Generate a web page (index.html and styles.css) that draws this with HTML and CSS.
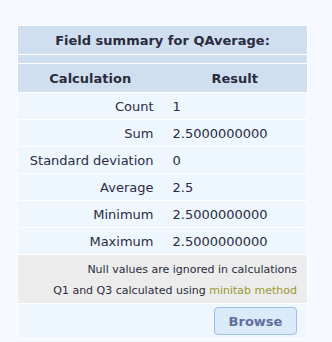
FILE: index.html
```html
<!DOCTYPE html>
<html>
<head>
<meta charset="utf-8">
<link rel="stylesheet" href="styles.css">
</head>
<body>
<table class="summary">
  <tr class="title-row"><th colspan="2">Field summary for QAverage:</th></tr>
  <tr class="spacer-row"><td colspan="2"></td></tr>
  <tr class="head-row"><th>Calculation</th><th>Result</th></tr>
  <tr class="data-row"><td class="label">Count</td><td class="value">1</td></tr>
  <tr class="data-row"><td class="label">Sum</td><td class="value">2.5000000000</td></tr>
  <tr class="data-row"><td class="label">Standard deviation</td><td class="value">0</td></tr>
  <tr class="data-row"><td class="label">Average</td><td class="value">2.5</td></tr>
  <tr class="data-row"><td class="label">Minimum</td><td class="value">2.5000000000</td></tr>
  <tr class="data-row"><td class="label">Maximum</td><td class="value">2.5000000000</td></tr>
  <tr class="note-row"><td colspan="2">
    <p class="note">Null values are ignored in calculations</p>
    <p class="note">Q1 and Q3 calculated using <a class="method" href="#">minitab method</a></p>
  </td></tr>
  <tr class="action-row"><td colspan="2"><button class="browse">Browse</button></td></tr>
</table>
</body>
</html>
```
FILE: styles.css
```css
html, body {
  margin: 0;
  padding: 0;
  background: #f5f8fe;
}
body {
  padding: 25px 0 0 17px;
  font-family: "DejaVu Sans", Verdana, sans-serif;
  color: #2a2c3e;
}
.summary {
  border-collapse: collapse;
  width: 291px;
  border: 1px solid #ffffff;
  table-layout: fixed;
}
.summary td, .summary th {
  padding: 0;
  border-bottom: 1px solid #ffffff;
}
.title-row th {
  background: #d0dff0;
  height: 28px;
  font-size: 13px;
  font-weight: bold;
  text-align: center;
}
.spacer-row td {
  background: #d0dff0;
  height: 8px;
}
.head-row th {
  background: #d0dff0;
  height: 28px;
  font-size: 13px;
  font-weight: bold;
  text-align: center;
}
.data-row td {
  background: #eef6fe;
  height: 26px;
  font-size: 13px;
}
.data-row .label {
  text-align: right;
  padding-right: 9px;
}
.data-row .value {
  text-align: left;
  padding-left: 10px;
}
.note-row td {
  background: #ececec;
  height: 46px;
  padding-top: 2px;
  padding-right: 10px;
  text-align: right;
}
.note {
  margin: 0;
  font-size: 11px;
  line-height: 21px;
}
.method {
  color: #9a9a2e;
  text-decoration: none;
}
.action-row td {
  background: #eef6fe;
  height: 34px;
  text-align: right;
  padding-right: 10px;
}
.browse {
  width: 83px;
  height: 28px;
  border: 1px solid #9cc0e6;
  border-radius: 4px;
  background: #dbeaf9;
  color: #5d6f9b;
  font-family: "DejaVu Sans", Verdana, sans-serif;
  font-size: 13px;
  font-weight: bold;
  vertical-align: middle;
}
```
